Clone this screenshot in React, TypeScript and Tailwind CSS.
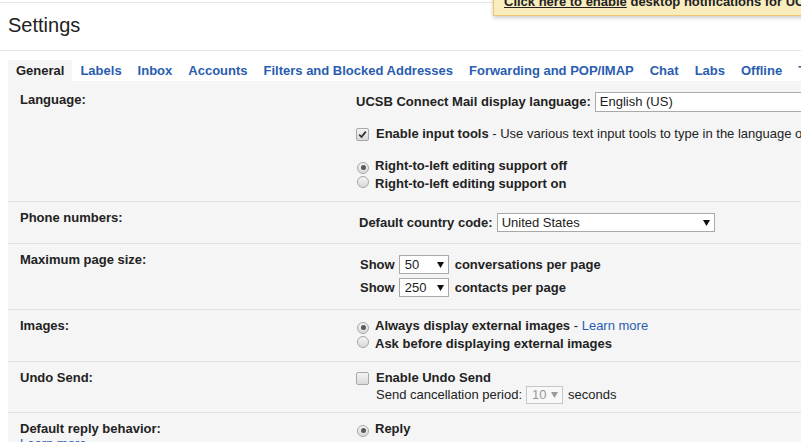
import type { ReactNode } from "react";

const tabs = [
  "General",
  "Labels",
  "Inbox",
  "Accounts",
  "Filters and Blocked Addresses",
  "Forwarding and POP/IMAP",
  "Chat",
  "Labs",
  "Offline",
  "Themes",
];

const Arrow = ({ muted = false }: { muted?: boolean }) => (
  <svg width="7" height="6" viewBox="0 0 7 6" className="shrink-0">
    <polygon points="0,0 7,0 3.5,6" fill={muted ? "#9a9a9a" : "#111"} />
  </svg>
);

const Select = ({ children, className, muted = false }: { children: ReactNode; className: string; muted?: boolean }) => (
  <span
    className={`inline-flex shrink-0 items-center justify-between border pr-[4px] font-normal ${
      muted ? "border-[#c6c6c6] bg-[#f8f8f8] text-[#999]" : "border-[#a9a9a9] bg-white text-[#222]"
    } ${className}`}
  >
    <span>{children}</span>
    <Arrow muted={muted} />
  </span>
);

const Radio = ({ on = false }: { on?: boolean }) => (
  <span className="inline-flex h-[12px] w-[12px] shrink-0 items-center justify-center rounded-full border border-[#a8a8a8] bg-linear-to-b from-[#f4f4f4] to-[#d9d9d9]">
    {on && <span className="h-[5px] w-[5px] rounded-full bg-[#5a5a5a]" />}
  </span>
);

const Checkbox = ({ on = false }: { on?: boolean }) => (
  <span className="inline-flex h-[13px] w-[13px] shrink-0 items-center justify-center rounded-[2px] border border-[#a8a8a8] bg-linear-to-b from-[#f4f4f4] to-[#dadada]">
    {on && (
      <svg width="9" height="9" viewBox="0 0 9 9">
        <path d="M1.2 4.6 L3.5 7 L7.8 1.6" fill="none" stroke="#333" strokeWidth="1.8" />
      </svg>
    )}
  </span>
);

const Row = ({ label, extra, first = false, children }: { label: string; extra?: ReactNode; first?: boolean; children: ReactNode }) => (
  <div className={`flex ${first ? "" : "border-t border-[#e3e3e3]"}`}>
    <div className={`w-[348px] shrink-0 pl-[12px] leading-[16px] ${first ? "pt-[11px]" : "pt-[8px]"}`}>
      <div className="font-bold">{label}</div>
      {extra}
    </div>
    <div className="min-w-0 flex-1">{children}</div>
  </div>
);

export default function App() {
  return (
    <div className="relative h-[442px] w-[801px] overflow-hidden bg-white font-['Liberation_Sans',Arial,sans-serif] text-[13px] text-[#222]">
      {/* notification banner */}
      <div className="absolute left-[493px] top-[-12px] h-[28px] w-[420px] whitespace-nowrap border border-[#f0c36d] bg-[#f9edbe] pl-[10px] pt-[5px] font-bold leading-[16px] shadow-[0_2px_4px_rgba(0,0,0,0.2)]">
        <span className="underline">Click here to enable</span> desktop notifications for UCSB Connect Mail.
      </div>

      <div className="h-[3px] border-b border-[#e6e6e6]" />

      <div className="border-b border-[#e3e3e3] pb-[13px] pl-[8px] pt-[10px] text-[20px] leading-[24px] text-[#222]">
        Settings
      </div>

      <div className="ml-[8px] mt-[9px] flex h-[21px] items-center whitespace-nowrap font-bold">
        {tabs.map((t, i) => (
          <div
            key={t}
            className={`flex h-full items-center px-[8px] ${i === 0 ? "bg-[#f5f5f5] text-[#222]" : "text-[#2a5db0]"}`}
          >
            {t}
          </div>
        ))}
      </div>

      <div className="ml-[8px] whitespace-nowrap bg-[#f5f5f5]">
        <Row label="Language:" first>
          <div className="pb-[8px] pt-[11px]">
            <div className="flex h-[20px] items-center font-bold">
              UCSB Connect Mail display language:
              <Select className="ml-[4px] h-[20px] w-[340px] pl-[4px]">English (US)</Select>
            </div>
            <div className="mt-[14px] flex h-[16px] items-center">
              <Checkbox on />
              <span className="ml-[7px]">
                <span className="font-bold">Enable input tools</span> - Use various text input tools to type in the language of your choice
              </span>
            </div>
            <div className="mt-[15px] font-bold leading-[18px]">
              <div className="flex items-center">
                <span className="ml-[1px]"><Radio on /></span>
                <span className="ml-[6px]">Right-to-left editing support off</span>
              </div>
              <div className="flex items-center">
                <span className="ml-[1px]"><Radio /></span>
                <span className="ml-[6px]">Right-to-left editing support on</span>
              </div>
            </div>
          </div>
        </Row>

        <Row label="Phone numbers:">
          <div className="pb-[11px] pl-[3px] pt-[11px]">
            <div className="flex h-[19px] items-center font-bold">
              Default country code:
              <Select className="ml-[4px] h-[19px] w-[218px] pl-[4px]">United States</Select>
            </div>
          </div>
        </Row>

        <Row label="Maximum page size:">
          <div className="pb-[12px] pl-[4px] pt-[11px] font-bold">
            <div className="flex h-[19px] items-center">
              Show
              <Select className="ml-[4px] mr-[6px] h-[19px] w-[50px] pl-[5px]">50</Select>
              conversations per page
            </div>
            <div className="mt-[4px] flex h-[19px] items-center">
              Show
              <Select className="ml-[4px] mr-[6px] h-[19px] w-[50px] pl-[5px]">250</Select>
              contacts per page
            </div>
          </div>
        </Row>

        <Row label="Images:">
          <div className="pb-[8px] pt-[7px] leading-[18px]">
            <div className="flex items-center">
              <span className="ml-[1px]"><Radio on /></span>
              <span className="ml-[6px]">
                <span className="font-bold">Always display external images</span> - <span className="text-[#2a5db0]">Learn more</span>
              </span>
            </div>
            <div className="flex items-center font-bold">
              <span className="ml-[1px]"><Radio /></span>
              <span className="ml-[6px]">Ask before displaying external images</span>
            </div>
          </div>
        </Row>

        <Row label="Undo Send:">
          <div className="pb-[8px] pt-[8px]">
            <div className="flex h-[16px] items-center">
              <Checkbox />
              <span className="ml-[7px] font-bold">Enable Undo Send</span>
            </div>
            <div className="ml-[20px] flex h-[18px] items-center">
              Send cancellation period:
              <Select muted className="ml-[4px] mr-[5px] h-[18px] w-[37px] pl-[5px]">10</Select>
              seconds
            </div>
          </div>
        </Row>

        <Row label="Default reply behavior:" extra={<div className="-mt-[1px] text-[#2a5db0]">Learn more</div>}>
          <div className="pb-[9px] pt-[8px] leading-[16px]">
            <div className="flex items-center font-bold">
              <span className="ml-[1px]"><Radio on /></span>
              <span className="ml-[6px]">Reply</span>
            </div>
          </div>
        </Row>
      </div>
    </div>
  );
}
